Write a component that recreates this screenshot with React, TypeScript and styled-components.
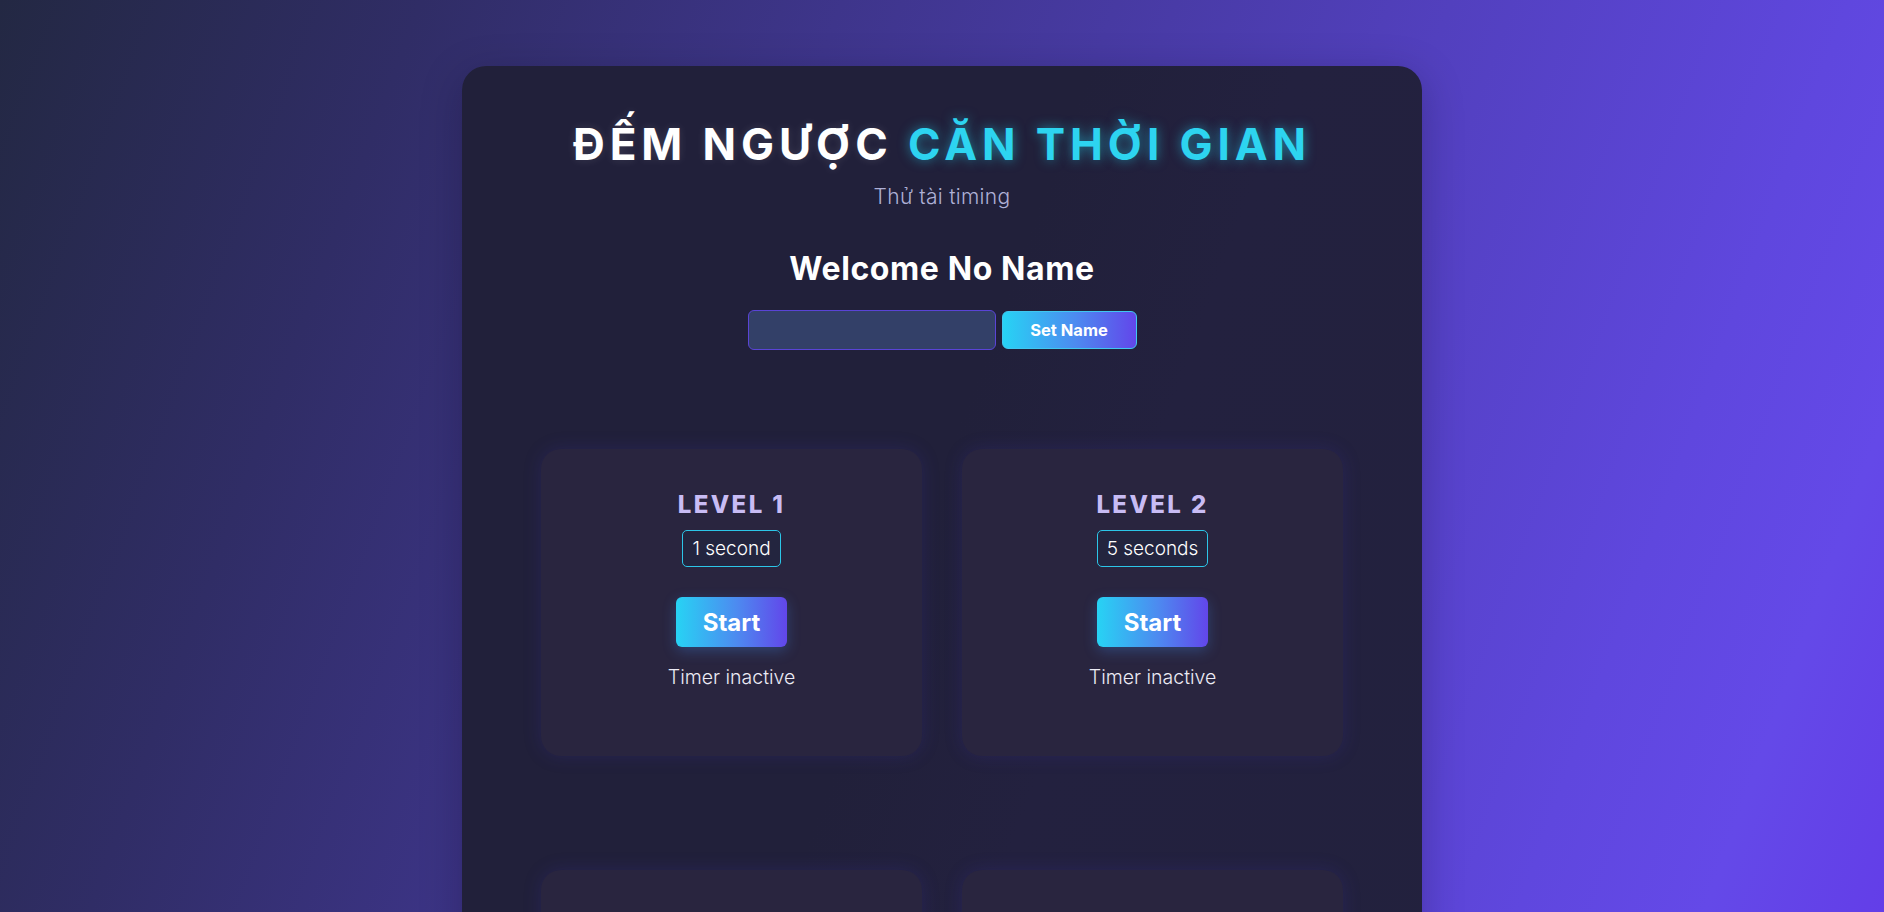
import React from "react";
import styled, { createGlobalStyle } from "styled-components";

const Global = createGlobalStyle`
  html, body {
    margin: 0;
    padding: 0;
  }
  body {
    font-family: Inter, "Noto Sans", sans-serif;
    color: #ffffff;
    background: #232843;
  }
  * { box-sizing: border-box; }
`;

const Page = styled.div`
  min-height: 100vh;
  padding-top: 66px;
  background: linear-gradient(
    110deg,
    #232843 0%,
    #302d66 18%,
    #3e358b 36%,
    #5240be 62%,
    #5f47de 79%,
    #6449e8 87%,
    #6236e8 100%
  );
`;

const Container = styled.main`
  width: 960px;
  margin: 0 auto;
  padding: 51px 79px 80px;
  border-radius: 24px;
  background: linear-gradient(110deg, #21203a 0%, #21203a 45%, #23213f 60%, #22213d 100%);
  box-shadow: 0 10px 40px rgba(10, 8, 30, 0.25);
  display: flex;
  flex-direction: column;
  align-items: center;
`;

const Title = styled.h1`
  margin: 0;
  font-family: Inter, "Noto Sans", sans-serif;
  font-weight: 700;
  font-size: 44px;
  line-height: 54px;
  letter-spacing: 4.9px;
  color: #ffffff;
  text-align: center;
  white-space: nowrap;
  text-shadow: 0 0 10px rgba(255, 255, 255, 0.12);
`;

const Accent = styled.span`
  color: #2dd4f0;
  text-shadow: 0 0 12px rgba(34, 211, 238, 0.55);
`;

const Subtitle = styled.p`
  margin: 13px 0 0;
  font-family: Inter, "Noto Sans", sans-serif;
  font-weight: 300;
  font-size: 21px;
  line-height: 26px;
  letter-spacing: 0.3px;
  color: #aeb0d6;
`;

const Welcome = styled.h2`
  margin: 40px 0 0;
  font-family: Inter, "Noto Sans", sans-serif;
  font-weight: 700;
  font-size: 32px;
  line-height: 38px;
  letter-spacing: 0.6px;
  color: #ffffff;
`;

const NameRow = styled.form`
  margin-top: 22px;
  display: flex;
  align-items: center;
  gap: 6px;
`;

const NameInput = styled.input`
  width: 248px;
  height: 40px;
  border: 1px solid #5a44d6;
  border-radius: 6px;
  background: #334068;
  color: #ffffff;
  padding: 0 12px;
  font-family: Inter, sans-serif;
  font-size: 16px;
  outline: none;
`;

const GradientButton = styled.button<{ $size?: "sm" | "lg" }>`
  border: ${(p) => (p.$size === "lg" ? "none" : "1px solid #3fc7f0")};
  border-radius: 6px;
  background: linear-gradient(90deg, #27d3f4 0%, #4d8af0 55%, #6246ea 100%);
  color: #ffffff;
  font-family: Inter, "Noto Sans", sans-serif;
  font-weight: 700;
  cursor: pointer;
  height: ${(p) => (p.$size === "lg" ? "50px" : "38px")};
  width: ${(p) => (p.$size === "lg" ? "111px" : "135px")};
  font-size: ${(p) => (p.$size === "lg" ? "24px" : "16.5px")};
  box-shadow: ${(p) =>
    p.$size === "lg"
      ? "0 4px 14px rgba(70, 150, 255, 0.28)"
      : "none"};
`;

const Levels = styled.section`
  margin-top: 99px;
  width: 802px;
  display: grid;
  grid-template-columns: 381px 381px;
  column-gap: 40px;
  row-gap: 114px;
`;

const LevelCard = styled.article`
  height: 307px;
  border-radius: 20px;
  background: #29253f;
  box-shadow: 0 0 18px rgba(60, 50, 170, 0.22);
  padding-top: 41px;
  display: flex;
  flex-direction: column;
  align-items: center;
`;

const LevelTitle = styled.h3`
  margin: 0;
  font-family: Inter, "Noto Sans", sans-serif;
  font-weight: 800;
  font-size: 24px;
  line-height: 29px;
  letter-spacing: 2.4px;
  color: #c8bcf4;
`;

const Duration = styled.div`
  margin-top: 11px;
  height: 37px;
  padding: 0 9px;
  display: flex;
  align-items: center;
  border: 1px solid #2cc6e8;
  border-radius: 5px;
  background: #23253f;
  font-family: Inter, "Noto Sans", sans-serif;
  font-weight: 300;
  font-size: 19px;
  color: #ffffff;
`;

const StartWrap = styled.div`
  margin-top: 30px;
`;

const Status = styled.p`
  margin: 17px 0 0;
  font-family: Inter, "Noto Sans", sans-serif;
  font-weight: 300;
  font-size: 19.5px;
  line-height: 26px;
  color: #ecebf5;
`;

const levels = [
  { name: "LEVEL 1", time: "1 second" },
  { name: "LEVEL 2", time: "5 seconds" },
  { name: "LEVEL 3", time: "10 seconds" },
  { name: "LEVEL 4", time: "20 seconds" },
];

export default function App() {
  return (
    <>
      <Global />
      <Page>
        <Container>
          <Title>
            ĐẾM NGƯỢC <Accent>CĂN THỜI GIAN</Accent>
          </Title>
          <Subtitle>Thử tài timing</Subtitle>
          <Welcome>Welcome No Name</Welcome>
          <NameRow onSubmit={(e) => e.preventDefault()}>
            <NameInput type="text" aria-label="Name" />
            <GradientButton type="submit">Set Name</GradientButton>
          </NameRow>
          <Levels>
            {levels.map((l) => (
              <LevelCard key={l.name}>
                <LevelTitle>{l.name}</LevelTitle>
                <Duration>{l.time}</Duration>
                <StartWrap>
                  <GradientButton $size="lg" type="button">
                    Start
                  </GradientButton>
                </StartWrap>
                <Status>Timer inactive</Status>
              </LevelCard>
            ))}
          </Levels>
        </Container>
      </Page>
    </>
  );
}
